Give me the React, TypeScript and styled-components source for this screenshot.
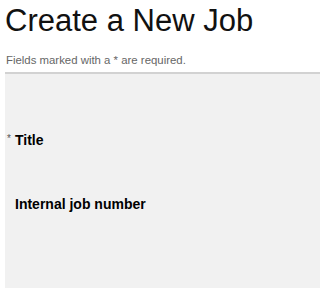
import React from "react";
import styled, { createGlobalStyle } from "styled-components";

const Global = createGlobalStyle`
  html, body { margin: 0; padding: 0; background: #ffffff; }
  body { font-family: "Liberation Sans", Arial, sans-serif; overflow: hidden; }
`;

const Page = styled.div`
  display: flex;
  flex-direction: column;
  padding-left: 5px;
  height: 288px;
  box-sizing: border-box;
`;

const Heading = styled.h1`
  margin: 0;
  padding-top: 5px;
  font-size: 31px;
  line-height: 31px;
  font-weight: normal;
  color: #111111;
`;

const Note = styled.p`
  margin: 18px 0 0 1px;
  font-size: 11.4px;
  line-height: 13px;
  color: #666666;
`;

const Panel = styled.div`
  flex: 1;
  margin-top: 5px;
  border-top: 2px solid #d2d2d2;
  background: #f1f1f1;
  padding: 58px 0 0 10px;
  display: flex;
  flex-direction: column;
`;

const Field = styled.div<{ $gap?: number }>`
  display: flex;
  flex-direction: column;
  margin-bottom: ${(p) => p.$gap ?? 0}px;
`;

const Label = styled.label`
  font-size: 14px;
  line-height: 16px;
  font-weight: bold;
  color: #000000;
`;

const Star = styled.span`
  display: inline-block;
  width: 8px;
  margin-left: -8px;
  font-size: 10px;
  font-weight: normal;
  color: #555555;
  vertical-align: top;
  line-height: 14px;
`;

export default function App() {
  return (
    <>
      <Global />
      <Page>
        <Heading>Create a New Job</Heading>
        <Note>Fields marked with a * are required.</Note>
        <Panel>
          <Field $gap={48}>
            <Label>
              <Star>*</Star>Title
            </Label>
          </Field>
          <Field>
            <Label>Internal job number</Label>
          </Field>
        </Panel>
      </Page>
    </>
  );
}
